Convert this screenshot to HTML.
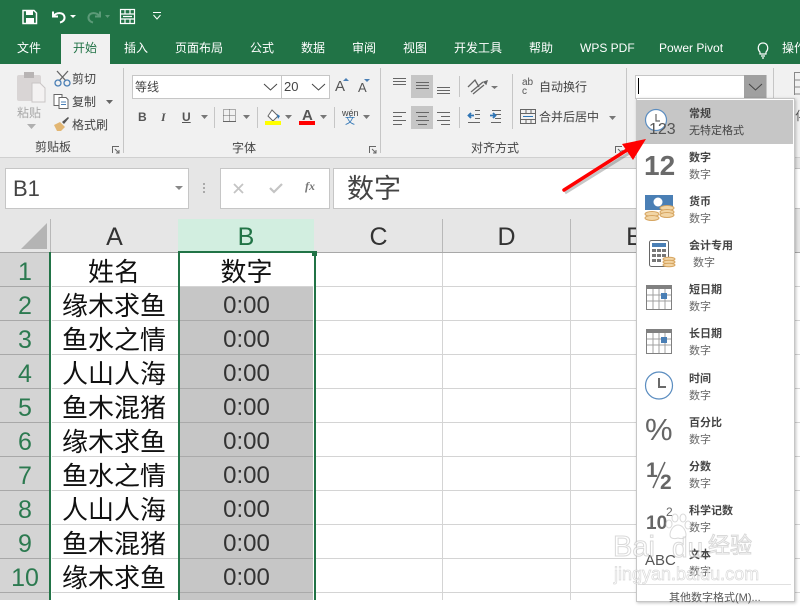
<!DOCTYPE html>
<html lang="zh"><head><meta charset="utf-8"><title>Excel</title>
<style>
html,body{margin:0;padding:0}
body{width:800px;height:600px;overflow:hidden;position:relative;background:#fff;font-family:"Liberation Sans","Noto Sans CJK SC",sans-serif;color:#444}
div,span{position:absolute;white-space:nowrap}
svg{position:absolute;overflow:visible}
.t{font-size:12px;line-height:16px;color:#fff;top:40px}
.s{font-size:12px;line-height:16px;color:#444}
.sep{width:1px;background:#c6c6c6}
.rh{left:0;width:50px;height:33px;background:#d4d4d4;border-bottom:1px solid #a8a8a8;text-align:center;color:#2c7a50;font-size:25px;line-height:38px;overflow:hidden}
.ca{left:50px;width:128px;height:34px;text-align:center;color:#111;font-size:26px;line-height:38px}
.cb{left:180px;width:133px;height:33px;background:#c6c6c6;border-bottom:1px solid #aaa;text-align:center;color:#333;font-size:24px;line-height:38px;overflow:hidden}
.ch{top:219px;height:33px;text-align:center;color:#333;font-size:25px;line-height:37px}
.gl{left:315px;width:485px;height:1px;background:#d4d4d4}
.gv{top:253px;width:1px;height:347px;background:#d4d4d4}
.mt{left:689px;font-size:11px;line-height:14px;color:#444;font-weight:700}
.ms{left:689px;font-size:11px;line-height:14px;color:#666}
.wm{color:rgba(255,255,255,.55);-webkit-text-stroke:1px rgba(185,185,185,.55)}
</style></head><body>

<div style="left:0;top:0;width:800px;height:64px;background:#217346"></div>
<div style="left:61px;top:34px;width:49px;height:30px;background:#f1f1f1"></div>
<div style="left:0;top:64px;width:800px;height:94px;background:#f1f1f1"></div>
<div style="left:0;top:157px;width:800px;height:62px;background:#e6e6e6;border-top:1px solid #d0d0d0"></div>

<svg style="left:0;top:0" width="170" height="34" fill="none" stroke="#fff">
<path d="M23 10.500h11l2.500 2.500v10.500h-13.500z" stroke-width="1.500"/><rect x="26" y="10" width="7" height="5" fill="#fff" stroke="none"/><rect x="26" y="18" width="8" height="5" fill="#fff" stroke="none"/>
<path d="M53 11.500v5h5M53.500 16c3-4 10-4 11 1 .4 3-2 5-4.500 5.500" stroke-width="2"/><path d="M70 15h6l-3 3z" fill="#fff" stroke="none"/>
<path d="M100 11.500v5h-5M99.500 16c-3-4-10-4-11 1-.4 3 2 5 4.500 5.500" stroke="#5c9a78" stroke-width="2"/><path d="M105 15h5l-2.500 3z" fill="#5c9a78" stroke="none"/>
<path d="M120.500 9.500h14v14h-14zM120.500 14h14M120.500 19h14M125 9.500v4.500M130 9.500v4.500M125 19v4.500M130 19v4.500M123 16.500h9" stroke-width="1.200"/>
<path d="M153 12.500h8M153.500 15l3.500 4 3.500-4" stroke-width="1"/>
</svg>

<div class="t" style="left:17px">文件</div>
<div class="t" style="left:73px;color:#217346">开始</div>
<div class="t" style="left:124px">插入</div>
<div class="t" style="left:175px">页面布局</div>
<div class="t" style="left:250px">公式</div>
<div class="t" style="left:301px">数据</div>
<div class="t" style="left:352px">审阅</div>
<div class="t" style="left:403px">视图</div>
<div class="t" style="left:454px">开发工具</div>
<div class="t" style="left:529px">帮助</div>
<div class="t" style="left:580px">WPS PDF</div>
<div class="t" style="left:659px">Power Pivot</div>
<svg style="left:755px;top:41px" width="16" height="18" fill="none" stroke="#fff" stroke-width="1.200"><path d="M5 11c-3-3-2-9 3-9s6 6 3 9v2H5zM6 15h4M7 17h2"/></svg>
<div class="t" style="left:782px">操作</div>

<!-- clipboard -->
<svg style="left:17px;top:72px" width="28" height="30"><rect x="0" y="3" width="24" height="26" rx="2" fill="#d9d5d5"/><rect x="7" y="0" width="10" height="6" fill="#b8b4b4"/><path d="M15 11h8l5 5v14H15z" fill="#f4f2f2" stroke="#c9c5c5"/></svg>
<div class="s" style="left:17px;top:105px;color:#a8a8a8">粘贴</div>
<svg style="left:27px;top:124px" width="10" height="6"><path d="M0 0h9l-4.500 5z" fill="#b0b0b0"/></svg>
<svg style="left:54px;top:70px" width="18" height="17" fill="none" stroke="#666" stroke-width="1.300"><path d="M3 1l9 10M14 1L5 11"/><circle cx="4" cy="13" r="3" stroke="#4a7fb5"/><circle cx="13" cy="13" r="3" stroke="#4a7fb5"/></svg>
<div class="s" style="left:72px;top:71px">剪切</div>
<svg style="left:53px;top:94px" width="18" height="15" fill="#fff" stroke="#666"><path d="M1 .5h8v11H1z"/><path d="M6 3.500h7l2 2v9H6z"/><path d="M8 8h5M8 10.500h5" stroke="#4a7fb5"/></svg>
<div class="s" style="left:72px;top:94px">复制</div>
<svg style="left:106px;top:100px" width="8" height="5"><path d="M0 0h7l-3.500 4z" fill="#666"/></svg>
<svg style="left:53px;top:116px" width="17" height="16"><path d="M1 9l6-3 5 5-4 4H4z" fill="#e2b673"/><path d="M9 6l6-5 1 1-5 6z" fill="#555"/></svg>
<div class="s" style="left:72px;top:117px">格式刷</div>
<div class="s" style="left:35px;top:139px">剪贴板</div>
<svg style="left:112px;top:146px" width="8" height="8" fill="none" stroke="#666"><path d="M.5 7V.5H7M3 3l4 4M7 4v3H4"/></svg>
<div class="sep" style="left:123px;top:68px;height:85px"></div>

<!-- font -->
<div style="left:132px;top:75px;width:148px;height:22px;background:#fff;border:1px solid #c6c6c6"></div>
<div class="s" style="left:135px;top:79px">等线</div>
<svg style="left:263px;top:83px" width="15" height="8" fill="none" stroke="#444"><path d="M1 1l6.500 6L14 1"/></svg>
<div style="left:281px;top:75px;width:47px;height:22px;background:#fff;border:1px solid #c6c6c6"></div>
<div class="s" style="left:284px;top:79px;font-size:13px">20</div>
<svg style="left:311px;top:83px" width="15" height="8" fill="none" stroke="#444"><path d="M1 1l6.500 6L14 1"/></svg>
<div class="s" style="left:335px;top:78px;font-size:15px;line-height:18px;color:#555">A</div>
<svg style="left:343px;top:78px" width="6" height="4"><path d="M0 3h6L3 0z" fill="#4a7fb5"/></svg>
<div class="s" style="left:358px;top:80px;font-size:13px;line-height:16px;color:#555">A</div>
<svg style="left:364px;top:79px" width="6" height="4"><path d="M0 0h6L3 3z" fill="#4a7fb5"/></svg>
<div class="s" style="left:138px;top:109px;font-weight:700;color:#555">B</div>
<div class="s" style="left:161px;top:109px;font-style:italic;color:#555;font-family:'Liberation Serif',serif;font-weight:700">I</div>
<div class="s" style="left:182px;top:109px;font-weight:700;color:#555;text-decoration:underline">U</div>
<svg style="left:201px;top:115px" width="8" height="5"><path d="M0 0h7l-3.500 4z" fill="#777"/></svg>
<div class="sep" style="left:214px;top:107px;height:21px"></div>
<svg style="left:223px;top:109px" width="14" height="14" fill="none" stroke="#666" stroke-dasharray="1 1"><path d="M.5.500h12v12H.5zM6.500.500v12M.5 6.500h12"/><path d="M0 12.500h13" stroke-dasharray="none"/></svg>
<svg style="left:243px;top:115px" width="8" height="5"><path d="M0 0h7l-3.500 4z" fill="#777"/></svg>
<div class="sep" style="left:257px;top:107px;height:21px"></div>
<svg style="left:265px;top:109px" width="17" height="17"><path d="M7 1l6 6-5 5-5-5z" fill="#fff" stroke="#666"/><path d="M12 5l3 2-2 3z" fill="#2f75b5"/><rect y="12" width="16" height="4" fill="#ffff00"/></svg>
<svg style="left:285px;top:115px" width="8" height="5"><path d="M0 0h7l-3.500 4z" fill="#777"/></svg>
<div class="s" style="left:302px;top:108px;font-size:15px;font-weight:700;color:#555">A</div>
<div style="left:299px;top:121px;width:16px;height:4px;background:#f00"></div>
<svg style="left:320px;top:115px" width="8" height="5"><path d="M0 0h7l-3.500 4z" fill="#777"/></svg>
<div class="sep" style="left:334px;top:107px;height:21px"></div>
<div class="s" style="left:342px;top:108px;font-size:9px;line-height:10px">wén</div>
<div class="s" style="left:345px;top:116px;font-size:10px;line-height:11px;color:#2f75b5">文</div>
<svg style="left:363px;top:115px" width="8" height="5"><path d="M0 0h7l-3.500 4z" fill="#777"/></svg>
<div class="s" style="left:232px;top:140px">字体</div>
<svg style="left:369px;top:146px" width="8" height="8" fill="none" stroke="#666"><path d="M.5 7V.5H7M3 3l4 4M7 4v3H4"/></svg>
<div class="sep" style="left:380px;top:68px;height:85px"></div>

<!-- alignment -->
<div style="left:411px;top:75px;width:22px;height:23px;background:#c6c6c6"></div>
<div style="left:411px;top:106px;width:22px;height:23px;background:#c6c6c6"></div>
<svg style="left:392px;top:76px" width="62" height="54" fill="none" stroke="#666">
<path d="M1 2.500h13M1 5.500h13M1 8.500h13M24 6.500h13M24 9.500h13M24 12.500h13M45 11.500h13M45 14.500h13M45 17.500h13"/>
<path d="M1 36.500h13M1 40.500h9M1 44.500h13M1 48.500h9M24 36.500h13M26 40.500h9M24 44.500h13M26 48.500h9M45 36.500h13M49 40.500h9M45 44.500h13M49 48.500h9"/>
</svg>
<div class="sep" style="left:459px;top:76px;height:21px"></div>
<div class="sep" style="left:459px;top:107px;height:21px"></div>
<svg style="left:467px;top:78px" width="30" height="18" fill="none" stroke="#666" stroke-width="1.300"><path d="M1 9l7-7 4 7M4 14l12-10M6 16l11-9"/><path d="M20 3l-3 1 2 2z" fill="#4a7fb5"/><path d="M24 8h7l-3.500 3z" fill="#777" stroke="none"/></svg>
<svg style="left:467px;top:109px" width="39" height="15" fill="none" stroke="#666"><path d="M13 1.500h-5M13 5.500H8M13 9.500H8M13 13.500H1M34 1.500h-9M34 5.500h-6M34 9.500h-6M34 13.500H24"/><path d="M7 6.500H2M4 4L1.500 6.500 4 9" stroke="#2f75b5" stroke-width="1.800"/><path d="M23 6.500h5M26 4l2.500 2.500L26 9" stroke="#2f75b5" stroke-width="1.800"/></svg>
<div class="sep" style="left:512px;top:74px;height:55px"></div>
<div class="s" style="left:522px;top:78px;font-size:10px;line-height:9px;color:#555;white-space:normal;width:14px;letter-spacing:0">ab<br>c</div>
<div class="s" style="left:539px;top:79px">自动换行</div>
<svg style="left:520px;top:109px" width="17" height="15" fill="none" stroke="#666"><path d="M.5.500h15v14H.5zM.5 4.500h15M.5 10.500h15M6 .5v4M11 .5v4M6 10.500v4M11 10.500v4"/><path d="M3 7.500h10" stroke="#2f75b5"/></svg>
<div class="s" style="left:539px;top:109px">合并后居中</div>
<svg style="left:609px;top:116px" width="8" height="5"><path d="M0 0h7l-3.500 4z" fill="#777"/></svg>
<div class="s" style="left:471px;top:140px">对齐方式</div>
<svg style="left:615px;top:146px" width="8" height="8" fill="none" stroke="#666"><path d="M.5 7V.5H7M3 3l4 4M7 4v3H4"/></svg>
<div class="sep" style="left:626px;top:68px;height:85px"></div>

<!-- number format box -->
<div style="left:635px;top:75px;width:130px;height:22px;background:#fff;border:1px solid #c6c6c6"></div>
<div style="left:744px;top:75px;width:22px;height:23px;background:#a0a0a0"></div>
<svg style="left:748px;top:83px" width="15" height="8" fill="none" stroke="#444"><path d="M1 1l6.500 6L14 1"/></svg>
<div style="left:638px;top:78px;width:1px;height:16px;background:#000"></div>
<div class="sep" style="left:773px;top:68px;height:85px"></div>
<svg style="left:794px;top:72px" width="6" height="24" fill="none" stroke="#888"><path d="M.5.500H6M.5 8H6M.5 15H6M.5 22H6M.5 0v23"/></svg>
<div class="s" style="left:795px;top:108px;color:#555">化</div>

<!-- formula bar -->
<div style="left:5px;top:168px;width:182px;height:39px;background:#fff;border:1px solid #c6c6c6"></div>
<div style="left:13px;top:176px;font-size:22px;line-height:26px;color:#444">B1</div>
<svg style="left:175px;top:186px" width="9" height="5"><path d="M0 0h8l-4 4z" fill="#888"/></svg>
<svg style="left:203px;top:183px" width="3" height="11" fill="#aaa"><rect width="2" height="2"/><rect y="4" width="2" height="2"/><rect y="8" width="2" height="2"/></svg>
<div style="left:220px;top:168px;width:108px;height:39px;background:#fff;border:1px solid #c6c6c6"></div>
<svg style="left:233px;top:183px" width="12" height="11" fill="none" stroke="#c4c4c4" stroke-width="1.800"><path d="M1 1l9 9M10 1l-9 9"/></svg>
<svg style="left:269px;top:183px" width="15" height="11" fill="none" stroke="#c4c4c4" stroke-width="2.200"><path d="M1 5l4 4 8-8"/></svg>
<div style="left:305px;top:179px;font:italic 700 12px/14px 'Liberation Serif',serif;color:#777">fx</div>
<div style="left:333px;top:168px;width:467px;height:39px;background:#fff;border:1px solid #c6c6c6;border-right:0"></div>
<div style="left:347px;top:172px;font-size:27px;line-height:34px;color:#444">数字</div>

<!-- column headers -->
<div style="left:0;top:219px;width:800px;height:33px;background:#e6e6e6;border-bottom:1px solid #a8a8a8"></div>
<svg style="left:21px;top:223px" width="27" height="27"><path d="M26 0v26H0z" fill="#b4b4b4"/></svg>
<div class="sep" style="left:50px;top:219px;height:33px;background:#b8b8b8"></div>
<div class="ch" style="left:51px;width:127px">A</div>
<div class="ch" style="left:178px;width:136px;background:#d2eee0;color:#217346">B</div>
<div class="ch" style="left:315px;width:127px">C</div>
<div class="sep" style="left:442px;top:219px;height:33px;background:#b8b8b8"></div>
<div class="ch" style="left:443px;width:127px">D</div>
<div class="sep" style="left:570px;top:219px;height:33px;background:#b8b8b8"></div>
<div class="ch" style="left:571px;width:127px">E</div>

<!-- grid -->
<div class="gl" style="top:286px"></div><div class="gl" style="top:320px"></div><div class="gl" style="top:354px"></div><div class="gl" style="top:388px"></div><div class="gl" style="top:422px"></div><div class="gl" style="top:456px"></div><div class="gl" style="top:490px"></div><div class="gl" style="top:524px"></div><div class="gl" style="top:558px"></div><div class="gl" style="top:592px"></div>
<div class="gv" style="left:442px"></div><div class="gv" style="left:570px"></div>
<div style="left:52px;top:286px;width:126px;height:1px;background:#d4d4d4"></div><div style="left:52px;top:320px;width:126px;height:1px;background:#d4d4d4"></div><div style="left:52px;top:354px;width:126px;height:1px;background:#d4d4d4"></div><div style="left:52px;top:388px;width:126px;height:1px;background:#d4d4d4"></div><div style="left:52px;top:422px;width:126px;height:1px;background:#d4d4d4"></div><div style="left:52px;top:456px;width:126px;height:1px;background:#d4d4d4"></div><div style="left:52px;top:490px;width:126px;height:1px;background:#d4d4d4"></div><div style="left:52px;top:524px;width:126px;height:1px;background:#d4d4d4"></div><div style="left:52px;top:558px;width:126px;height:1px;background:#d4d4d4"></div><div style="left:52px;top:592px;width:126px;height:1px;background:#d4d4d4"></div>

<div class="rh" style="top:253px">1</div><div class="rh" style="top:287px">2</div><div class="rh" style="top:321px">3</div><div class="rh" style="top:355px">4</div><div class="rh" style="top:389px">5</div><div class="rh" style="top:423px">6</div><div class="rh" style="top:457px">7</div><div class="rh" style="top:491px">8</div><div class="rh" style="top:525px">9</div><div class="rh" style="top:559px">10</div>
<div class="rh" style="top:593px;height:7px;border:0"></div>

<div class="ca" style="top:253px">姓名</div><div class="ca" style="top:287px">缘木求鱼</div><div class="ca" style="top:321px">鱼水之情</div><div class="ca" style="top:355px">人山人海</div><div class="ca" style="top:389px">鱼木混猪</div><div class="ca" style="top:423px">缘木求鱼</div><div class="ca" style="top:457px">鱼水之情</div><div class="ca" style="top:491px">人山人海</div><div class="ca" style="top:525px">鱼木混猪</div><div class="ca" style="top:559px">缘木求鱼</div>

<div class="cb" style="top:253px;background:#fff;border-bottom:1px solid #d4d4d4;font-size:26px;color:#111">数字</div>
<div class="cb" style="top:287px">0:00</div><div class="cb" style="top:321px">0:00</div><div class="cb" style="top:355px">0:00</div><div class="cb" style="top:389px">0:00</div><div class="cb" style="top:423px">0:00</div><div class="cb" style="top:457px">0:00</div><div class="cb" style="top:491px">0:00</div><div class="cb" style="top:525px">0:00</div><div class="cb" style="top:559px">0:00</div>
<div class="cb" style="top:593px;height:7px;border:0"></div>

<div style="left:49px;top:252px;width:2px;height:348px;background:#217346"></div>
<div style="left:178px;top:252px;width:2px;height:348px;background:#217346"></div>
<div style="left:314px;top:252px;width:2px;height:348px;background:#217346"></div>
<div style="left:178px;top:251px;width:137px;height:2px;background:#217346"></div>
<div style="left:312px;top:251px;width:5px;height:5px;background:#217346;border:0"></div>

<!-- dropdown -->
<div style="left:636px;top:98px;width:157px;height:502px;background:#fff;border:1px solid #c6c6c6;box-shadow:1px 1px 3px rgba(0,0,0,.25)"></div>
<div style="left:637px;top:100px;width:156px;height:44px;background:#c6c6c6"></div>

<svg style="left:645px;top:108px" width="28" height="32" fill="none"><circle cx="11" cy="12" r="10.500" fill="#fff" stroke="#5b8dc0" stroke-width="1.200"/><path d="M11 6v7h4" stroke="#666" stroke-width="1.200"/></svg>
<div style="left:649px;top:120px;font-size:16px;line-height:19px;color:#555">123</div>
<div class="mt" style="top:107px">常规</div>
<div class="ms" style="top:124px;color:#444">无特定格式</div>

<div style="left:644px;top:149px;font-size:28px;line-height:34px;font-weight:700;color:#6a6a6a">12</div>
<div class="mt" style="top:151px">数字</div><div class="ms" style="top:168px">数字</div>

<svg style="left:645px;top:195px" width="30" height="28"><rect width="28" height="15" fill="#4a7fb5"/><circle cx="13" cy="7" r="4.500" fill="#fff"/><g fill="#f2d5a5" stroke="#d6a45f"><ellipse cx="22" cy="13" rx="7" ry="2.500"/><ellipse cx="22" cy="17" rx="7" ry="2.500"/><ellipse cx="22" cy="20" rx="7" ry="2.500"/><ellipse cx="7" cy="19" rx="7" ry="2.500"/><ellipse cx="7" cy="23" rx="7" ry="2.500"/></g></svg>
<div class="mt" style="top:195px">货币</div><div class="ms" style="top:212px">数字</div>

<svg style="left:649px;top:240px" width="28" height="30"><rect x=".5" y=".5" width="19" height="26" rx="2" fill="#fff" stroke="#666"/><rect x="3" y="3" width="14" height="4" fill="#4a7fb5"/><g fill="#777"><rect x="3" y="9" width="4" height="3"/><rect x="8" y="9" width="4" height="3"/><rect x="13" y="9" width="4" height="3"/><rect x="3" y="14" width="4" height="3"/><rect x="8" y="14" width="4" height="3"/><rect x="13" y="14" width="4" height="3"/><rect x="3" y="19" width="4" height="3"/><rect x="8" y="19" width="4" height="3"/></g><g fill="#f2d5a5" stroke="#d6a45f"><ellipse cx="20" cy="19" rx="6" ry="1.800"/><ellipse cx="20" cy="22" rx="6" ry="1.800"/><ellipse cx="20" cy="25" rx="6" ry="1.800"/></g></svg>
<div class="mt" style="top:239px">会计专用</div><div class="ms" style="top:256px;left:693px">数字</div>

<svg style="left:646px;top:285px" width="26" height="25" fill="none" stroke="#a0a0a0"><rect x=".5" y=".5" width="25" height="24" fill="#fff" stroke="#808080"/><rect width="26" height="4" fill="#808080" stroke="none"/><path d="M7 4v20M13 4v20M19 4v20M1 10h24M1 16h24"/><rect x="15" y="8" width="6" height="6" fill="#4a7fb5" stroke="none"/></svg>
<div class="mt" style="top:283px">短日期</div><div class="ms" style="top:300px">数字</div>

<svg style="left:646px;top:329px" width="26" height="25" fill="none" stroke="#a0a0a0"><rect x=".5" y=".5" width="25" height="24" fill="#fff" stroke="#808080"/><rect width="26" height="4" fill="#808080" stroke="none"/><path d="M7 4v20M13 4v20M19 4v20M1 10h24M1 16h24"/><rect x="15" y="8" width="6" height="6" fill="#4a7fb5" stroke="none"/></svg>
<div class="mt" style="top:327px">长日期</div><div class="ms" style="top:344px">数字</div>

<svg style="left:645px;top:372px" width="28" height="28" fill="none"><circle cx="14" cy="13.500" r="13.500" stroke="#5b8dc0" stroke-width="1.200"/><path d="M14 6v9h7" stroke="#6a6a6a" stroke-width="2"/></svg>
<div class="mt" style="top:372px">时间</div><div class="ms" style="top:389px">数字</div>

<div style="left:645px;top:412px;font-size:31px;line-height:36px;color:#666">%</div>
<div class="mt" style="top:416px">百分比</div><div class="ms" style="top:433px">数字</div>

<div style="left:646px;top:460px;font-size:21px;line-height:22px;font-weight:700;color:#666">1</div>
<svg style="left:650px;top:461px" width="20" height="28"><path d="M15 1L3 27" stroke="#666" stroke-width="1.500"/></svg>
<div style="left:660px;top:471px;font-size:21px;line-height:24px;font-weight:700;color:#666">2</div>
<div class="mt" style="top:460px">分数</div><div class="ms" style="top:477px">数字</div>

<div style="left:646px;top:513px;font-size:19px;line-height:22px;font-weight:700;color:#666">10</div>
<div style="left:666px;top:505px;font-size:12px;line-height:14px;color:#666">2</div>
<div class="mt" style="top:504px">科学记数</div><div class="ms" style="top:521px">数字</div>

<div style="left:645px;top:552px;font-size:15px;line-height:18px;color:#555">ABC</div>
<div class="mt" style="top:548px">文本</div><div class="ms" style="top:565px">数字</div>
<div style="left:638px;top:584px;width:153px;height:1px;background:#e0e0e0"></div>
<div class="s" style="left:669px;top:590px;font-size:11px;color:#555">其他数字格式(M)...</div>

<!-- watermark -->
<svg style="left:664px;top:514px" width="28" height="28" fill="rgba(255,255,255,.55)" stroke="rgba(185,185,185,.55)"><ellipse cx="5" cy="10" rx="3" ry="4"/><ellipse cx="11" cy="4" rx="3" ry="4"/><ellipse cx="19" cy="4" rx="3" ry="4"/><ellipse cx="24" cy="11" rx="3" ry="4"/><path d="M14 11c5 0 8 6 8 10 0 4-5 4-8 3-3 1-8 1-8-3 0-4 3-10 8-10z"/></svg>
<div class="wm" style="left:613px;top:530px;font-size:29px;line-height:34px">Bai</div>
<div class="wm" style="left:672px;top:531px;font-size:28px;line-height:34px">du</div>
<div class="wm" style="left:708px;top:533px;font-size:22px;line-height:26px">经验</div>
<div class="wm" style="left:614px;top:564px;font-size:18px;line-height:20px;-webkit-text-stroke-width:.7px">jingyan.baidu.com</div>

<!-- arrow -->
<svg style="left:555px;top:130px" width="100" height="70"><path d="M9 61L75 20" stroke="rgba(0,0,0,.22)" stroke-width="3" transform="translate(1 2)"/><path d="M9 60L72 20" stroke="#f00" stroke-width="3.500" stroke-linecap="round"/><path d="M91 9L67 14l11 16z" fill="#f00"/></svg>

</body></html>
